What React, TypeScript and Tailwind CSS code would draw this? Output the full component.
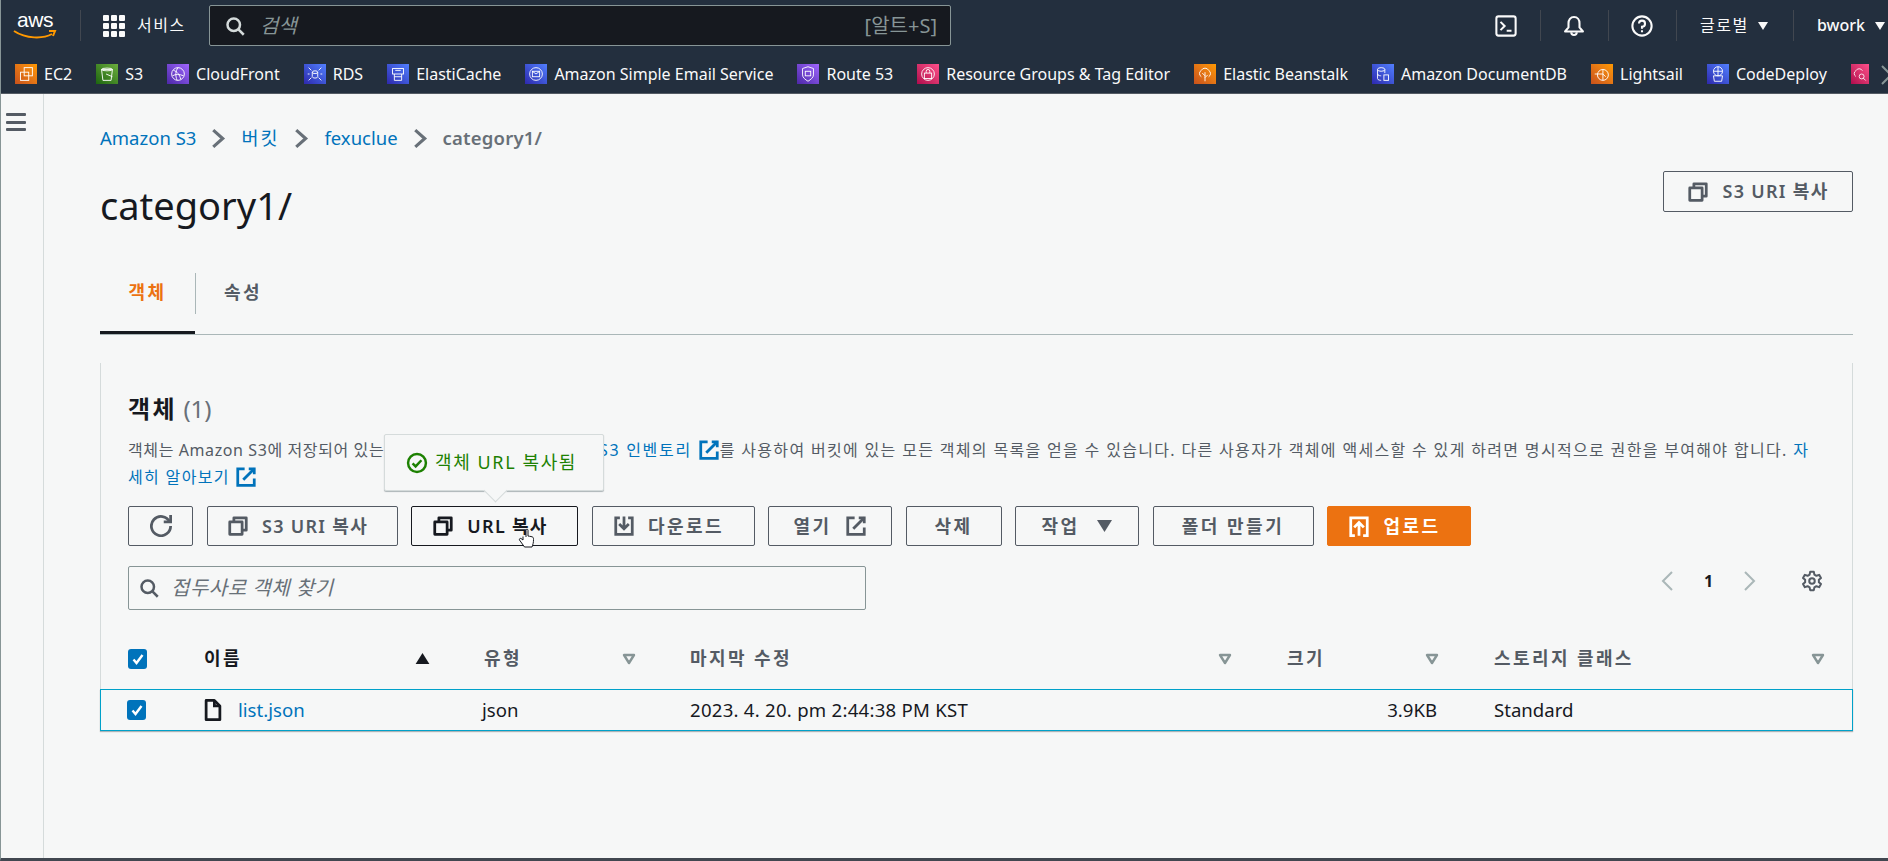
import type { ReactNode } from "react";

const FONT = "font-['Noto_Sans','Noto_Sans_CJK_KR',sans-serif]";

const shortcuts = [
  { label: "EC2", color: "bg-gradient-to-tr from-[#c8511b] to-[#ff9900]", kind: "ec2" },
  { label: "S3", color: "bg-gradient-to-tr from-[#1b660f] to-[#6cae3e]", kind: "s3" },
  { label: "CloudFront", color: "bg-gradient-to-tr from-[#4d27a8] to-[#a166ff]", kind: "globe" },
  { label: "RDS", color: "bg-gradient-to-tr from-[#2e27ad] to-[#527fff]", kind: "rds" },
  { label: "ElastiCache", color: "bg-gradient-to-tr from-[#2e27ad] to-[#527fff]", kind: "cache" },
  { label: "Amazon Simple Email Service", color: "bg-gradient-to-tr from-[#2e27ad] to-[#527fff]", kind: "mail" },
  { label: "Route 53", color: "bg-gradient-to-tr from-[#4d27a8] to-[#a166ff]", kind: "shield" },
  { label: "Resource Groups & Tag Editor", color: "bg-gradient-to-tr from-[#b0084d] to-[#ff4f8b]", kind: "lock" },
  { label: "Elastic Beanstalk", color: "bg-gradient-to-tr from-[#c8511b] to-[#ff9900]", kind: "tree" },
  { label: "Amazon DocumentDB", color: "bg-gradient-to-tr from-[#2e27ad] to-[#527fff]", kind: "doc" },
  { label: "Lightsail", color: "bg-gradient-to-tr from-[#c8511b] to-[#ff9900]", kind: "sail" },
  { label: "CodeDeploy", color: "bg-gradient-to-tr from-[#2e27ad] to-[#527fff]", kind: "deploy" },
];

function ServiceGlyph({ kind }: { kind: string }) {
  const paths: Record<string, ReactNode> = {
    ec2: <><rect x="9" y="4" width="9" height="9" /><rect x="5" y="9" width="9" height="9" /></>,
    s3: <><path d="M5 6h12l-1.5 12h-9z" /><ellipse cx="11" cy="6" rx="6" ry="1.5" /><path d="M10 11l7 3" /></>,
    globe: <><circle cx="11" cy="11" r="7" /><path d="M6 7c4 1 7 5 8 10M11 4c-3 4-3 9-1 14M5 13c3-2 8-2 12 0" /></>,
    rds: <><ellipse cx="11" cy="9" rx="3" ry="1.5" /><path d="M8 9v5c0 2 6 2 6 0V9" /><path d="M4 4l3 3M18 4l-3 3M4 18l3-3M18 18l-3-3M5 11H3M19 11h-2" /></>,
    cache: <><rect x="5" y="5" width="12" height="6" /><path d="M7 11v7h8v-7M7 14h8M8 7h6" /></>,
    mail: <><circle cx="11" cy="11" r="7" /><rect x="7" y="8" width="8" height="6" /><path d="M7 8l4 3 4-3" /></>,
    shield: <><path d="M11 3l6 2v7c0 3-3 5-6 7-3-2-6-4-6-7V5z" /><rect x="8" y="8" width="6" height="5" /></>,
    lock: <><circle cx="11" cy="11" r="7" /><rect x="7" y="10" width="8" height="6" /><path d="M9 10V8a2 2 0 0 1 4 0v2" /></>,
    tree: <><path d="M11 19V9M11 13l-3-3M11 15l3-3" /><path d="M7 14a4 4 0 0 1 0-7 4.5 4.5 0 0 1 8 0 4 4 0 0 1 0 7" /></>,
    doc: <><ellipse cx="9" cy="6" rx="4" ry="2" /><path d="M5 6v10c0 2 4 2 4 2M13 6v4M5 11c0 2 4 2 4 2" /><rect x="12" y="12" width="5" height="6" /></>,
    sail: <><circle cx="12" cy="12" r="6" /><path d="M3 11h9M12 6v12M12 11l3 3" /></>,
    deploy: <><circle cx="11" cy="8" r="5" /><path d="M6 8h10M11 3v10M6 13h10l-1 6H7z" /></>,
    search: <><path d="M6 14a4 4 0 0 1 0-7 4.5 4.5 0 0 1 8 0" /><circle cx="13" cy="14" r="3" /><path d="M15 16l3 3" /></>,
  };
  return (
    <svg viewBox="0 0 22 22" className="h-[20px] w-[22px]" fill="none" stroke="white" strokeWidth="1">
      {paths[kind]}
    </svg>
  );
}

function Icon({ children, className = "h-[22px] w-[22px]", strokeWidth = 2 }: { children: ReactNode; className?: string; strokeWidth?: number }) {
  return (
    <svg viewBox="0 0 16 16" className={className} fill="none" stroke="currentColor" strokeWidth={strokeWidth}>
      {children}
    </svg>
  );
}

const CopyIcon = () => (
  <Icon>
    <path d="M2 5h9v9H2z" strokeLinejoin="round" />
    <path d="M5 5V2h9v9h-3" strokeLinejoin="round" />
  </Icon>
);

const SearchIcon = ({ className }: { className?: string }) => (
  <Icon className={className}>
    <circle cx="7" cy="7" r="5" />
    <path d="m15 15-4.65-4.65" />
  </Icon>
);

const ExternalIcon = ({ className }: { className?: string }) => (
  <Icon className={className}>
    <path d="M10 2h4v4" />
    <path d="m6 10 8-8" />
    <path d="M14 9.05V14H2V2h5" />
  </Icon>
);

const Caret = ({ className }: { className: string }) => (
  <svg viewBox="0 0 10 8" className={className} fill="currentColor">
    <path d="M0 0h10L5 8z" />
  </svg>
);

const SortDown = () => (
  <svg viewBox="0 0 14 12" className="h-[12px] w-[14px] text-[#879596]" fill="none" stroke="currentColor" strokeWidth="2.4" strokeLinejoin="round">
    <path d="M2 2h10L7 10z" />
  </svg>
);

const Check = () => (
  <span className="flex h-5 w-[19px] items-center justify-center rounded-[3px] bg-[#0073bb]">
    <svg viewBox="0 0 14 14" className="h-[14px] w-[14px]" fill="none" stroke="white" strokeWidth="2.4">
      <path d="M2.5 7.5 5.5 11l6-8" />
    </svg>
  </span>
);

function Divider({ className }: { className: string }) {
  return <span className={`h-[31px] w-px bg-[#414750] ${className}`} />;
}

function ServicesBar() {
  return (
    <div className="flex h-[37px] items-start overflow-hidden pl-[14px] pt-[8px]">
      {shortcuts.map((item) => (
        <div key={item.label} className="mr-[24px] flex shrink-0 items-center">
          <span className={`mr-[7px] flex h-[20px] w-[22px] items-center justify-center ${item.color}`}>
            <ServiceGlyph kind={item.kind} />
          </span>
          <span className="text-[16px] leading-[20px] whitespace-nowrap text-[#fafafa]">{item.label}</span>
        </div>
      ))}
      <span className="flex h-[20px] w-[18px] shrink-0 items-center justify-center overflow-hidden bg-gradient-to-tr from-[#b0084d] to-[#ff4f8b]">
        <ServiceGlyph kind="search" />
      </span>
      <svg viewBox="0 0 12 22" className="ml-[12px] h-[22px] w-[12px] shrink-0 text-[#879596]" fill="none" stroke="currentColor" strokeWidth="2">
        <path d="M1 2l9 9-9 9" />
      </svg>
    </div>
  );
}

function TopBar() {
  return (
    <header className="h-[94px] shrink-0 border-b border-[#545b64] bg-[#232f3e]">
      <div className="flex h-[56px] items-start pt-[5px]">
        <div className="ml-[12px] mt-[5px] flex w-[44px] flex-col items-center">
          <span className="font-['Liberation_Sans',sans-serif] text-[21px] leading-[20px] tracking-[-0.5px] text-white">aws</span>
          <svg viewBox="0 0 44 10" className="mt-[-1px] h-[10px] w-[44px]" fill="none">
            <path d="M1 2c12 8 29 8 38 3" stroke="#ff9900" strokeWidth="2" />
            <path d="M36 2h6l-2 5" stroke="#ff9900" strokeWidth="2" />
          </svg>
        </div>
        <Divider className="ml-[23px] mt-[5px]" />
        <div className="ml-[22px] mt-[10px] grid h-[22px] w-[22px] grid-cols-3 gap-[2px]">
          {Array.from({ length: 9 }, (_, i) => (
            <span key={i} className="rounded-[1px] bg-[#fafafa]" />
          ))}
        </div>
        <span className="ml-[12px] mt-[10px] w-[50px] text-[16px] leading-[20px] tracking-[1.5px] whitespace-nowrap text-[#fafafa]">서비스</span>
        <div className="ml-[22px] flex h-[41px] w-[742px] items-center rounded-[2px] border border-[#879596] bg-[#16191f] pl-[15px] pr-[13px]">
          <SearchIcon className="h-[20px] w-[20px] text-[#d5dbdb]" />
          <span className="ml-[15px] text-[20px] text-[#879596] italic">검색</span>
          <span className="ml-auto text-[20px] text-[#879596]">[알트+S]</span>
        </div>
        <Icon className="ml-[544px] mt-[10px] h-[22px] w-[22px] text-[#fafafa]" strokeWidth={1.5}>
          <rect x="1" y="1" width="14" height="14" rx="1.5" />
          <path d="M4 5l3 3-3 3M8.5 11.5H12" />
        </Icon>
        <Divider className="ml-[23px] mt-[5px]" />
        <Icon className="ml-[22px] mt-[10px] h-[22px] w-[22px] text-[#fafafa]" strokeWidth={1.5}>
          <path d="M8 1.5c-2.6 0-4 2-4 4.500v3L1.500 12h13L12 9V6c0-2.500-1.400-4.500-4-4.500z" strokeLinejoin="round" />
          <path d="M6 12.500a2 2 0 0 0 4 0" />
        </Icon>
        <Divider className="ml-[23px] mt-[5px]" />
        <Icon className="ml-[22px] mt-[10px] h-[22px] w-[22px] text-[#fafafa]" strokeWidth={1.5}>
          <circle cx="8" cy="8" r="7" />
          <path d="M5.800 6.200A2.200 2.200 0 1 1 8 8.500v1.500M8 11v1.500" />
        </Icon>
        <Divider className="ml-[23px] mt-[5px]" />
        <span className="ml-[23px] mt-[10px] w-[50px] text-[16px] leading-[20px] tracking-[1.5px] whitespace-nowrap text-[#fafafa]">글로벌</span>
        <Caret className="ml-[8px] mt-[17px] h-[8px] w-[10px] text-[#fafafa]" />
        <Divider className="ml-[25px] mt-[5px]" />
        <span className="ml-[23px] mt-[10px] w-[48px] text-[16px] leading-[20px] font-medium text-[#fafafa]">bwork</span>
        <Caret className="ml-[10px] mt-[17px] h-[8px] w-[10px] text-[#fafafa]" />
      </div>
      <ServicesBar />
    </header>
  );
}

function Chevron() {
  return (
    <svg viewBox="0 0 14 20" className="mx-[15px] h-[21px] w-[15px] text-[#687078]" fill="none" stroke="currentColor" strokeWidth="3">
      <path d="M2 2l9 8-9 8" />
    </svg>
  );
}

function Btn({ children, width, className = "border-[#545b64] text-[#545b64]" }: { children: ReactNode; width: string; className?: string }) {
  return (
    <button className={`flex items-center justify-center gap-[13px] rounded-[2px] border text-[18px] font-semibold whitespace-nowrap ${width} ${className}`}>
      {children}
    </button>
  );
}

function HeaderCell({ label, strong, pad, sort }: { label: string; strong?: boolean; pad: string; sort?: ReactNode }) {
  return (
    <div className={`flex items-center justify-between ${pad}`}>
      <span className={`text-[18px] font-semibold tracking-[2.4px] whitespace-nowrap ${strong ? "text-[#16191f]" : "text-[#545b64]"}`}>{label}</span>
      {sort ?? <SortDown />}
    </div>
  );
}

function HandCursor() {
  return (
    <svg viewBox="0 0 18 20" className="pointer-events-none absolute left-[107px] top-[22px] h-5 w-[18px]" fill="white" stroke="#16191f" strokeWidth="1">
      <path d="M8 9V2.200a1 1 0 0 1 2 0V8l1.500.300 1.500.200 1.500.500c1 .4 1 1.500 1 2.500 0 3-.5 5-1.500 7.500H6.500L1.500 12c-.5-1 .5-2 1.500-1.500L5 12V8.500" strokeLinejoin="round" />
    </svg>
  );
}

function Tooltip() {
  return (
    <div className="absolute bottom-[55px] left-[-27px] flex h-[57px] w-[220px] items-center rounded-[2px] border border-[#d5dbdb] bg-[#f6f7f7] pl-[21px] shadow-[0_1px_1px_rgba(0,28,36,0.3)]">
      <svg viewBox="0 0 16 16" className="mr-[7px] h-[22px] w-[22px] shrink-0 text-[#1d8102]" fill="none" stroke="currentColor" strokeWidth="1.800">
        <circle cx="8" cy="8" r="6.500" />
        <path d="M4.800 8.200 7 10.500l4.200-4.500" />
      </svg>
      <span className="text-[18px] tracking-[1.6px] whitespace-nowrap text-[#1d8102]">객체 URL 복사됨</span>
      <span className="absolute bottom-[-9px] left-[102px] h-[17px] w-[17px] rotate-45 border-r border-b border-[#d5dbdb] bg-[#f6f7f7]" />
    </div>
  );
}

function Toolbar() {
  return (
    <div className="mt-[15px] flex h-10 gap-[13.5px]">
      <Btn width="w-[65px]">
        <Icon className="h-[22px] w-[22px]">
          <path d="M10 5h5V0" />
          <path d="M15 8a7 7 0 1 1-.7-3" />
        </Icon>
      </Btn>
      <Btn width="w-[191px] pr-[9px]"><CopyIcon /><span className="tracking-[1.3px]">S3 URI 복사</span></Btn>
      <div className="relative flex">
        <Tooltip />
        <Btn width="w-[167px] pr-[9px]" className="border-[#16191f] text-[#16191f]"><CopyIcon /><span className="tracking-[1.3px]">URL 복사</span></Btn>
        <HandCursor />
      </div>
      <Btn width="w-[163px] pr-[9px]">
        <Icon>
          <path d="M11 2h3v12H2V2h3" />
          <path d="M4.500 6.500 8 10l3.500-3.500M8 1v9" />
        </Icon>
        <span className="tracking-[2.5px]">다운로드</span>
      </Btn>
      <Btn width="w-[124px]"><span className="tracking-[2.5px]">열기</span><ExternalIcon className="h-[22px] w-[22px]" /></Btn>
      <Btn width="w-[96px]"><span className="tracking-[2.5px]">삭제</span></Btn>
      <Btn width="w-[124px]"><span className="tracking-[2.5px]">작업</span><Caret className="ml-[3px] h-[12px] w-[17px]" /></Btn>
      <Btn width="w-[161px]"><span className="tracking-[2.5px]">폴더 만들기</span></Btn>
      <Btn width="w-[144px] pr-[9px]" className="border-[#ec7211] bg-[#ec7211] text-white">
        <Icon>
          <path d="M5 15H2V2h12v13h-3" />
          <path d="M8 15V6M4.500 9 8 5.500 11.500 9" />
        </Icon>
        <span className="tracking-[2.5px]">업로드</span>
      </Btn>
    </div>
  );
}

function ObjectsPanel() {
  return (
    <section className="mt-[28px] w-full border-x border-[#d5dbdb]">
      <div className="pl-[27px] pt-[29px]">
        <h2 className="text-[24px] leading-[34px] font-bold text-[#16191f]">
          <span className="tracking-[2.5px]">객체</span> <span className="font-normal text-[#687078]">(1)</span>
        </h2>
        <p className="mt-[11px] w-[1697px] text-[16px] leading-[27px] tracking-[1.33px] text-[#545b64]">
          <span className="tracking-[0.6px]">객체는 Amazon S3에 저장되어 있는 </span><span className="tracking-[1.7px]">기본 개체입니다. </span><a className="tracking-[1.7px] text-[#0073bb]">Amazon S3 인벤토리 <ExternalIcon className="inline h-[22px] w-[22px] align-[-5px] text-[#0073bb]" /></a>를 사용하여 버킷에 있는 모든 객체의 목록을 얻을 수 있습니다. 다른 사용자가 객체에 액세스할 수 있게 하려면 명시적으로 권한을 부여해야 합니다. <a className="text-[#0073bb]">자세히 알아보기 <ExternalIcon className="inline h-[22px] w-[22px] align-[-5px] text-[#0073bb]" /></a>
        </p>
        <Toolbar />
        <div className="mt-[20px] flex items-start justify-between">
          <div className="flex h-[44px] w-[738px] items-center rounded-[2px] border border-[#879596] pl-[10px]">
            <SearchIcon className="h-[20px] w-[20px] text-[#545b64]" />
            <span className="ml-[12px] text-[20px] tracking-[0.5px] text-[#687078] italic">접두사로 객체 찾기</span>
          </div>
          <div className="mr-[29px] mt-[4px] flex h-[22px] items-center">
            <svg viewBox="0 0 12 20" className="h-[20px] w-[12px] text-[#aab7b8]" fill="none" stroke="currentColor" strokeWidth="2"><path d="M11 1 2 10l9 9" /></svg>
            <span className="ml-[31px] w-[8px] text-[16px] font-bold text-[#16191f]">1</span>
            <svg viewBox="0 0 12 20" className="ml-[32px] h-[20px] w-[12px] text-[#aab7b8]" fill="none" stroke="currentColor" strokeWidth="2"><path d="m1 1 9 9-9 9" /></svg>
            <svg viewBox="0 0 24 24" className="ml-[45px] h-[22px] w-[22px] text-[#545b64]" fill="none" stroke="currentColor" strokeWidth="2.2" strokeLinejoin="round">
              <path d="M10 2h4l.6 3 2.200 1.300 3-1 2 3.400-2.300 2 0 2.600 2.300 2-2 3.400-3-1-2.200 1.300-.6 3h-4l-.6-3-2.200-1.300-3 1-2-3.400 2.300-2v-2.600l-2.300-2 2-3.400 3 1L9.400 5z" />
              <circle cx="12" cy="12" r="3" />
            </svg>
          </div>
        </div>
      </div>
      <div className="mt-[26px] grid h-[53px] grid-cols-[103px_280px_206px_597px_207px_1fr] items-center pb-[8px]">
        <div className="pl-[27px]"><Check /></div>
        <HeaderCell label="이름" strong pad="pr-[54px]" sort={<Caret className="h-[11px] w-[15px] rotate-180 text-[#16191f]" />} />
        <HeaderCell label="유형" pad="pr-[54px]" />
        <HeaderCell label="마지막 수정" pad="pr-[55px]" />
        <HeaderCell label="크기" pad="pr-[55px]" />
        <HeaderCell label="스토리지 클래스" pad="pr-[27px]" />
      </div>
    </section>
  );
}

export default function App() {
  return (
    <div className={`flex h-[861px] w-[1888px] flex-col overflow-hidden border-b-[3px] border-l border-[#414750] border-l-[#879596] bg-[#f6f7f7] ${FONT}`}>
      <TopBar />
      <div className="flex flex-1">
        <aside className="w-[43px] shrink-0 border-r border-[#d5dbdb] pl-[5px] pt-[19px]">
          <div className="flex w-[20px] flex-col gap-[4.5px]">
            <span className="h-[3px] rounded-[1px] bg-[#545b64]" />
            <span className="h-[3px] rounded-[1px] bg-[#545b64]" />
            <span className="h-[3px] rounded-[1px] bg-[#545b64]" />
          </div>
        </aside>
        <main className="w-[1809px] pl-[56px]">
          <nav className="flex h-[77px] items-center pt-[11px] text-[18.5px]" aria-label="breadcrumb">
            <a className="text-[#0073bb]">Amazon S3</a>
            <Chevron />
            <a className="tracking-[2px] text-[#0073bb]">버킷</a>
            <Chevron />
            <a className="text-[#0073bb]">fexuclue</a>
            <Chevron />
            <span className="font-semibold tracking-[0.2px] text-[#687078]">category1/</span>
          </nav>
          <div className="flex items-start justify-between">
            <h1 className="pt-[9px] text-[38px] leading-[50px] text-[#16191f]">category1/</h1>
            <Btn width="w-[190px] h-[41px]"><CopyIcon /><span className="tracking-[1.3px]">S3 URI 복사</span></Btn>
          </div>
          <div className="mt-[43px] flex h-[62px] border-b border-[#aab7b8]">
            <div className="flex h-[61px] w-[95px] items-start justify-center border-b-[3px] border-[#16191f] pt-[6px]">
              <span className="text-[18px] font-bold tracking-[2.5px] text-[#ec7211]">객체</span>
            </div>
            <div className="h-[41px] w-px bg-[#aab7b8]" />
            <span className="ml-[28px] pt-[6px] text-[18px] font-bold tracking-[2.5px] text-[#545b64]">속성</span>
          </div>
          <ObjectsPanel />
          <div className="grid h-[42px] w-full grid-cols-[103px_280px_206px_597px_207px_1fr] items-center border border-[#00a1c9] text-[18.6px] shadow-[0_1px_1px_rgba(0,28,36,0.3)]">
            <div className="pl-[26px]"><Check /></div>
            <div className="-ml-[2px] flex items-center gap-[14px]">
              <Icon className="h-[22px] w-[22px] text-[#16191f]">
                <path d="M3 1h6l4 4v10H3z" strokeLinejoin="round" />
                <path d="M9 1v4h4" />
              </Icon>
              <a className="text-[#0073bb]">list.json</a>
            </div>
            <span className="-ml-[2px] text-[#16191f]">json</span>
            <span className="tracking-[0.25px] whitespace-nowrap text-[#16191f]">2023. 4. 20. pm 2:44:38 PM KST</span>
            <span className="pr-[57px] text-right text-[#16191f]">3.9KB</span>
            <span className="text-[#16191f]">Standard</span>
          </div>
        </main>
      </div>
    </div>
  );
}
